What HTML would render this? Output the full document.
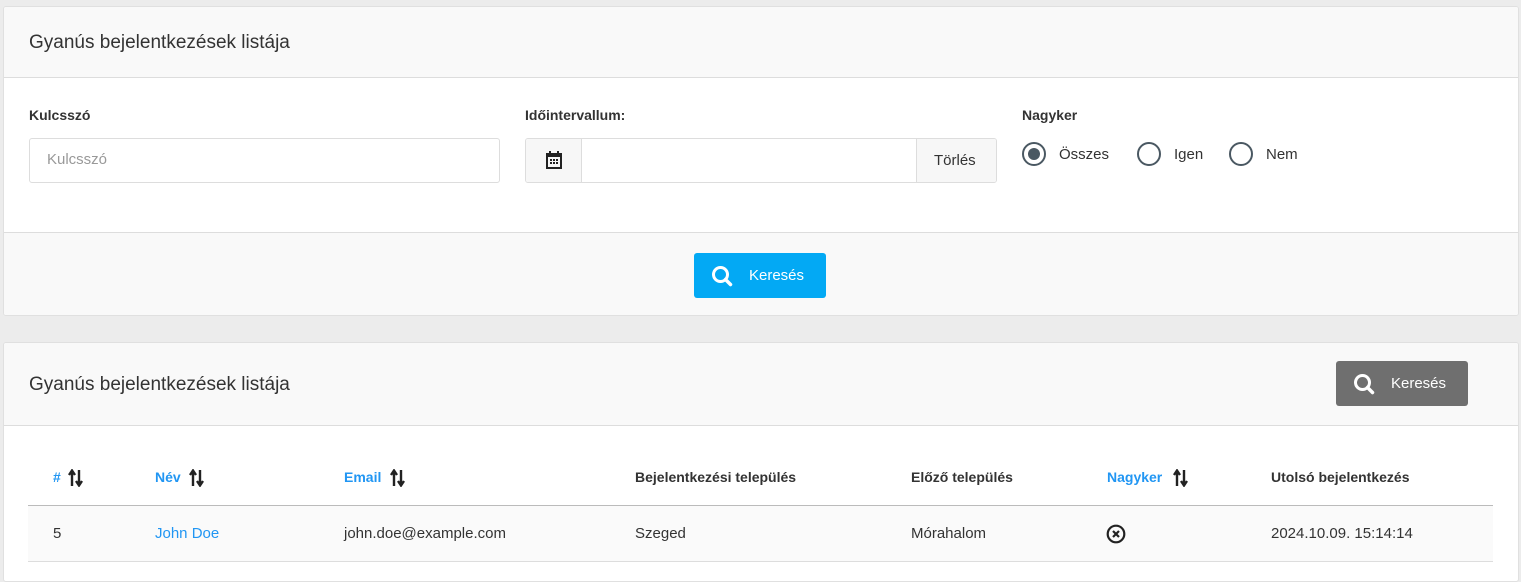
<!DOCTYPE html>
<html><head><meta charset="utf-8"><style>
*{box-sizing:border-box;margin:0;padding:0}
body{width:1521px;height:568px;overflow:hidden;background:#ececec;font-family:"Liberation Sans",sans-serif;color:#333;position:relative}
.card{position:absolute;left:3px;width:1516px;background:#fff;border:1px solid #e0e0e0;border-radius:3px;overflow:hidden}
.hdr{background:#f9f9f9;border-bottom:1px solid #ddd;position:relative}
.title{position:absolute;left:25px;font-size:19px;color:#333}
.abs{position:absolute}
.lbl{font-size:14px;font-weight:bold;color:#333}
.radio{position:absolute;width:24px;height:24px;border:2px solid #4a5862;border-radius:50%}
.th{position:absolute;top:469px;font-size:14px;font-weight:bold;color:#333}
.td{position:absolute;top:525px;font-size:15px;color:#333}
.blue{color:#2196f3}
</style></head><body>
<div class="card" style="top:6px;height:310px">
  <div class="hdr" style="height:71px"><div class="title" style="top:25px">Gyanús bejelentkezések listája</div></div>
  <div class="abs lbl" style="left:25px;top:100px">Kulcsszó</div>
  <div class="abs" style="left:25px;top:131px;width:471px;height:45px;border:1px solid #ddd;border-radius:3px;padding:12px 17px;font-size:15px;color:#999">Kulcsszó</div>
  <div class="abs lbl" style="left:521px;top:100px">Időintervallum:</div>
  <div class="abs" style="left:521px;top:131px;width:472px;height:45px;border:1px solid #ddd;border-radius:3px;overflow:hidden">
    <div class="abs" style="left:0;top:0;width:56px;height:43px;background:#f7f7f7;border-right:1px solid #ddd">
      <svg class="abs" style="left:18px;top:11px" width="20" height="20" viewBox="0 0 20 20"><rect x="2" y="3" width="16" height="16" fill="#222"/><rect x="4" y="7" width="12" height="10" fill="#f7f7f7"/><rect x="5" y="1" width="2" height="4" fill="#222"/><rect x="13" y="1" width="2" height="4" fill="#222"/><g fill="#222"><rect x="6" y="9" width="2" height="2"/><rect x="9" y="9" width="2" height="2"/><rect x="12" y="9" width="2" height="2"/><rect x="6" y="12" width="2" height="2"/><rect x="9" y="12" width="2" height="2"/><rect x="12" y="12" width="2" height="2"/></g></svg>
    </div>
    <div class="abs" style="right:0;top:0;width:80px;height:43px;background:#f7f7f7;border-left:1px solid #ddd;font-size:15px;padding:13px 0 0 17px">Törlés</div>
  </div>
  <div class="abs lbl" style="left:1018px;top:100px">Nagyker</div>
  <div class="radio" style="left:1018px;top:135px"><div class="abs" style="left:4px;top:4px;width:12px;height:12px;border-radius:50%;background:#4a5862"></div></div>
  <div class="abs" style="left:1055px;top:139px;font-size:15px">Összes</div>
  <div class="radio" style="left:1133px;top:135px"></div>
  <div class="abs" style="left:1170px;top:139px;font-size:15px">Igen</div>
  <div class="radio" style="left:1225px;top:135px"></div>
  <div class="abs" style="left:1262px;top:139px;font-size:15px">Nem</div>
  <div class="abs" style="left:0;top:225px;width:100%;height:85px;background:#f9f9f9;border-top:1px solid #ddd">
    <div class="abs" style="left:690px;top:20px;width:132px;height:45px;background:#03a9f4;border-radius:3px;color:#fff;font-size:15px">
      <svg class="abs" style="left:17px;top:12px" width="22" height="22" viewBox="0 0 22 22"><circle cx="9.5" cy="9.5" r="7" fill="none" stroke="#fff" stroke-width="3"/><path d="M14.5 14.5L19.5 19.5" stroke="#fff" stroke-width="3.5" stroke-linecap="round"/></svg>
      <span class="abs" style="left:55px;top:14px">Keresés</span>
    </div>
  </div>
</div>
<div class="card" style="top:342px;height:240px">
  <div class="hdr" style="height:83px"><div class="title" style="top:31px">Gyanús bejelentkezések listája</div>
    <div class="abs" style="left:1332px;top:18px;width:132px;height:45px;background:#6f6f6f;border-radius:3px;color:#fff;font-size:15px">
      <svg class="abs" style="left:17px;top:12px" width="22" height="22" viewBox="0 0 22 22"><circle cx="9.5" cy="9.5" r="7" fill="none" stroke="#fff" stroke-width="3"/><path d="M14.5 14.5L19.5 19.5" stroke="#fff" stroke-width="3.5" stroke-linecap="round"/></svg>
      <span class="abs" style="left:55px;top:14px">Keresés</span>
    </div>
  </div>
</div>
<svg width="0" height="0" style="position:absolute"><defs><g id="s"><path d="M4 17V3M1 6L4 1.5L7 6" stroke="#222" stroke-width="2.4" fill="none"/><path d="M11 1V15M8 12L11 16.5L14 12" stroke="#222" stroke-width="2.4" fill="none"/></g></defs></svg>
<div class="th blue" style="left:53px">#</div><svg class="abs" style="left:68px;top:469px" width="16" height="18"><use href="#s"/></svg>
<div class="th blue" style="left:155px">Név</div><svg class="abs" style="left:189px;top:469px" width="16" height="18"><use href="#s"/></svg>
<div class="th blue" style="left:344px">Email</div><svg class="abs" style="left:390px;top:469px" width="16" height="18"><use href="#s"/></svg>
<div class="th" style="left:635px">Bejelentkezési település</div>
<div class="th" style="left:911px">Előző település</div>
<div class="th blue" style="left:1107px">Nagyker</div><svg class="abs" style="left:1173px;top:469px" width="16" height="18"><use href="#s"/></svg>
<div class="th" style="left:1271px">Utolsó bejelentkezés</div>
<div class="abs" style="left:28px;top:505px;width:1465px;height:57px;background:#fafafa;border-top:1px solid #bbb;border-bottom:1px solid #ddd"></div>
<div class="td" style="left:53px">5</div>
<div class="td blue" style="left:155px">John Doe</div>
<div class="td" style="left:344px">john.doe@example.com</div>
<div class="td" style="left:635px">Szeged</div>
<div class="td" style="left:911px">Mórahalom</div>
<svg class="abs" style="left:1106px;top:524px" width="20" height="20" viewBox="0 0 20 20"><circle cx="10" cy="10" r="8.3" fill="none" stroke="#222" stroke-width="2.2"/><path d="M7 7L13 13M13 7L7 13" stroke="#222" stroke-width="2.2"/></svg>
<div class="td" style="left:1271px">2024.10.09. 15:14:14</div>
</body></html>
